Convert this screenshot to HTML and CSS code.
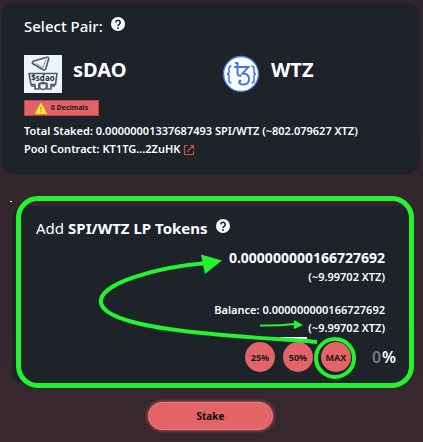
FILE: index.html
```html
<!DOCTYPE html>
<html lang="en">
<head>
<meta charset="utf-8">
<meta name="viewport" content="width=device-width, initial-scale=1">
<title>Stake</title>
<link rel="stylesheet" href="styles.css">
</head>
<body>
<main class="page">
  <section class="card pair-card">
    <h2 class="heading">Select Pair:
      <svg class="help" viewBox="0 0 14 14" aria-hidden="true"><circle cx="7" cy="7" r="7" fill="#fff"/><path d="M4.800 5.500a2.200 2.200 0 1 1 3.500 1.700Q7 8 7 9" fill="none" stroke="#1e2229" stroke-width="1.600"/><circle cx="7" cy="11" r="1" fill="#1e2229"/></svg>
    </h2>
    <div class="tokens">
      <div class="token">
        <svg class="token-icon" viewBox="0 0 38 38" aria-hidden="true">
          <rect width="38" height="38" fill="#edf4fe"/>
          <g fill="none" stroke="#55585d" stroke-width="1.600" stroke-linejoin="round">
            <path d="M8.500 8.500Q8 7 10 6L23 2.300Q25 2 24.600 4L22 13Q21 16 18.800 14.500Z"/>
            <path d="M12 8.500l7 4 3-8" stroke-width=".6"/>
            <path d="M5 18.500h28l-1.500 11H27V34h-4v-5.500h-8V34h-4v-4.500H7Z"/>
            <circle cx="19" cy="31" r="3.500"/>
            <path d="M7 31h4M27 31h4"/>
          </g>
          <text class="logo-text" x="19" y="26" text-anchor="middle">$sdao</text>
        </svg>
        <span class="token-name">sDAO</span>
      </div>
      <div class="token">
        <svg class="token-icon" viewBox="0 0 38 38" aria-hidden="true">
          <circle cx="19" cy="19" r="17.500" fill="#fff" stroke="#3f78f0" stroke-width="1.400"/>
          <g fill="none" stroke="#3f73ef" stroke-width="1.900">
            <path d="M9.500 11Q7 11 7 13.500v3Q7 19 5 19q2 0 2 2.500v4Q7 28 9.500 28M29.500 11q2.500 0 2.500 2.500v3q0 2.500 2 2.500-2 0-2 2.500v4q0 2.500-2.500 2.500" stroke-width="1.500"/>
            <path d="M12 12h14.500l-6 6.500q6.500 0 6.500 5.500 0 5.500-5.500 5.500-4.500 0-4.500-3M15.500 7v11q0 3.500 4 2.500"/>
            <path d="M13 8h2.500"/>
          </g>
          <circle cx="18" cy="26" r="1.500" fill="#3f73ef"/>
        </svg>
        <span class="token-name">WTZ</span>
      </div>
    </div>
    <div class="badge">
      <svg class="warning" viewBox="0 0 12 11" aria-hidden="true"><path d="M6 .5L11.500 10.500H.5Z" fill="#fdec2f" stroke="#fdec2f" stroke-linejoin="round"/><path d="M6 4v3M6 8v1.200" stroke="#9c8a32" stroke-width="1.200"/></svg>
      0 Decimals
    </div>
    <p class="line">Total Staked: 0.00000001337687493 SPI/WTZ (~802.079627 XTZ)</p>
    <p class="line">Pool Contract: KT1TG...2ZuHK
      <a class="external" href="#" aria-label="Open pool contract"><svg viewBox="0 0 12 12" aria-hidden="true"><path d="M5 1.500H1.500v9h9V7M7 1.500h3.500V5M10.500 1.500L4 8" fill="none" stroke="#c75058" stroke-width="1.200"/></svg></a>
    </p>
  </section>

  <section class="card add-card">
    <span class="speck"></span>
    <h2 class="heading">Add <strong>SPI/WTZ LP Tokens</strong>
      <svg class="help" viewBox="0 0 14 14" aria-hidden="true"><circle cx="7" cy="7" r="7" fill="#fff"/><path d="M4.800 5.500a2.200 2.200 0 1 1 3.500 1.700Q7 8 7 9" fill="none" stroke="#1e2229" stroke-width="1.600"/><circle cx="7" cy="11" r="1" fill="#1e2229"/></svg>
    </h2>
    <div class="figures">
      <p class="amount">0.000000000166727692</p>
      <p class="line">(~9.99702 XTZ)</p>
      <p class="line balance">Balance: 0.000000000166727692</p>
      <p class="line">(~9.99702 XTZ)</p>
    </div>
    <div class="controls">
      <button class="round" type="button">25%</button>
      <button class="round" type="button">50%</button>
      <button class="round" type="button">MAX</button>
      <label class="percent"><input class="percent-input" type="text" inputmode="numeric" placeholder="0" aria-label="Percent of balance">%</label>
    </div>
    <span class="frame"></span>
    <svg class="arrows" viewBox="0 0 320 190" aria-hidden="true">
      <path d="M189 132h27" stroke="#fff" stroke-width="2"/>
      <g fill="none" stroke="#22f52f">
        <path d="M226 136C170 131 16 127 10 97C6 78 65 61 116 57" stroke-width="4"/>
        <path d="M169 119.500Q186 120 203 118" stroke-width="2"/>
        <circle cx="244" cy="152" r="19" stroke-width="4"/>
      </g>
      <path d="M110 48.500L131 54.500 114 68ZM203 114L212 119 203 123Z" fill="#22f52f"/>
    </svg>
  </section>

  <button class="stake" type="button">Stake</button>
</main>
</body>
</html>
```
FILE: styles.css
```css
* {
  box-sizing: border-box;
}

body {
  margin: 0;
  min-height: 100vh;
  background: linear-gradient(#2f252c, #38272e);
  color: #fff;
  font-family: "Noto Sans", sans-serif;
  font-size: 11px;
  line-height: 18px;
}

h2,
p {
  margin: 0;
}

button,
input {
  font-family: inherit;
}

.page {
  display: flex;
  flex-direction: column;
  padding: 3px 3px 11px 1px;
}

.card {
  background: #1e2229;
  border-radius: 12px;
}

.pair-card {
  padding: 11px 23px 16px;
}

.heading {
  display: flex;
  align-items: center;
  gap: 4px;
  font-size: 15px;
  font-weight: 500;
  line-height: 24px;
}

.help {
  width: 14px;
  height: 14px;
  margin: 0 0 5px 4px;
}

.tokens {
  display: grid;
  grid-template-columns: 198px 1fr;
  margin-top: 17px;
}

.token {
  display: flex;
  gap: 11px;
}

.token-icon {
  width: 38px;
  height: 38px;
}

.logo-text {
  font-family: "Noto Sans", sans-serif;
  font-size: 8px;
  font-weight: 700;
  fill: #23343f;
}

.token-name {
  font-size: 20px;
  font-weight: 700;
  line-height: 30px;
}

.badge {
  display: flex;
  align-items: center;
  justify-content: center;
  gap: 4px;
  width: 75px;
  height: 16px;
  margin: 7px 0 6px;
  border: 1px solid #bd4549;
  background: #e26467;
  color: #1e1a1e;
  font-size: 7px;
  font-weight: 700;
}

.warning {
  width: 12px;
  height: 11px;
}

.line {
  font-weight: 600;
}

.external {
  display: inline-block;
  vertical-align: middle;
}

.external svg {
  display: block;
  width: 12px;
  height: 12px;
}

.add-card {
  position: relative;
  margin: 32px 9px 0 11px;
  padding: 10px 15px 11px 24px;
}

.add-card .heading {
  font-weight: 400;
}

.figures {
  padding-right: 11px;
  text-align: right;
}

.amount {
  font-size: 14px;
  font-weight: 700;
  line-height: 36px;
  margin-bottom: -8px;
}

.amount + .line {
  margin-bottom: 15px;
}

.controls {
  display: flex;
  align-items: center;
  justify-content: flex-end;
  gap: 8px;
  margin-top: 5px;
}

.round {
  width: 30px;
  height: 30px;
  padding: 0;
  border: 0;
  border-radius: 50%;
  background: #e26467;
  color: #1e1a1e;
  font-size: 9px;
  font-weight: 700;
}

.percent {
  display: flex;
  align-items: center;
  margin-left: 13px;
  font-size: 16px;
  font-weight: 600;
}

.percent-input {
  width: 10px;
  padding: 0;
  border: 0;
  outline: 0;
  background: none;
  color: #fff;
  font-size: 16px;
  font-weight: 600;
}

.percent-input::placeholder {
  color: #777a80;
}

.frame {
  position: absolute;
  inset: -10px -3px -5px 4px;
  border: 5px solid #22f52f;
  border-radius: 22px;
  pointer-events: none;
}

.speck {
  position: absolute;
  top: -5px;
  left: -2px;
  width: 2px;
  height: 1px;
  background: #fff;
}

.arrows {
  position: absolute;
  top: 0;
  right: 0;
  width: 320px;
  height: 190px;
  pointer-events: none;
}

.stake {
  align-self: center;
  width: 125px;
  height: 28px;
  margin-top: 19px;
  border: 1px solid #f07b7e;
  border-radius: 14px;
  background: #e26467;
  box-shadow: 0 0 4px #e26467;
  color: #100c0e;
  font-size: 10px;
  font-weight: 700;
}
```
